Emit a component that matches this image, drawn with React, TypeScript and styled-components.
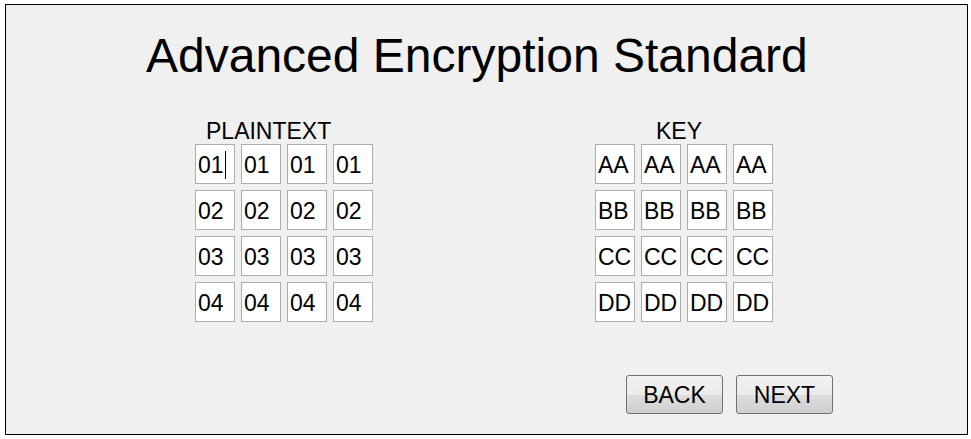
import React from 'react';
import styled, {createGlobalStyle} from 'styled-components';

const GlobalStyle = createGlobalStyle`
  body {
    margin: 0;
    background: #ffffff;
    font-family: "Liberation Sans", Arial, sans-serif;
  }
`

const Frame = styled.div`
  margin: 4px 0 0 5px;
  width: 963px;
  height: 431px;
  box-sizing: border-box;
  border: 1px solid #000;
  background: #f0f0f0;
  display: flex;
  flex-direction: column;
`
const Title = styled.h1`
  margin: 27px 0 0 0;
  padding-left: 140px;
  font-size: 48px;
  line-height: 48px;
  font-weight: 400;
  color: #000;
`
const Panels = styled.div`
  margin-top: 40px;
  padding-left: 189px;
  display: flex;
  gap: 222px;
`
const Panel = styled.div`
  display: flex;
  flex-direction: column;
`
const Label = styled.div<{$indent: number}>`
  padding-left: ${p => p.$indent}px;
  font-size: 23px;
  line-height: 22px;
  height: 22px;
  margin-bottom: 2px;
  color: #000;
`
const Grid = styled.div`
  display: grid;
  grid-template-columns: repeat(4, 40px);
  grid-auto-rows: 40px;
  gap: 6px;
`
const Cell = styled.div`
  box-sizing: border-box;
  border: 1px solid #adadad;
  background: #fff;
  font-size: 23px;
  line-height: 36px;
  padding: 2px 0 0 2px;
  color: #000;
  white-space: nowrap;
  overflow: hidden;
  display: flex;
  align-items: center;
`
const Caret = styled.span`
  display: inline-block;
  width: 1px;
  height: 28px;
  background: #000;
  margin-left: 1px;
`
const ButtonRow = styled.div`
  margin-top: 53px;
  padding-left: 620px;
  display: flex;
  gap: 13px;
`
const Button = styled.button`
  width: 97px;
  height: 39px;
  box-sizing: border-box;
  border: 1px solid #707070;
  border-radius: 3px;
  background: linear-gradient(to bottom, #f2f2f2 0%, #ebebeb 50%, #dddddd 51%, #cfcfcf 100%);
  font-family: "Liberation Sans", Arial, sans-serif;
  font-size: 23px;
  color: #000;
  padding: 2px 0 0 0;
`

const plaintext = ['01', '02', '03', '04'];
const key = ['AA', 'BB', 'CC', 'DD'];

const Matrix = ({rows, caret}: {rows: string[], caret?: boolean}) => (
  <Grid>
    {rows.map((v, r) =>
      [0, 1, 2, 3].map(c => (
        <Cell key={`${r}-${c}`}>
          {v}
          {caret && r === 0 && c === 0 && <Caret />}
        </Cell>
      ))
    )}
  </Grid>
);

const App = () => {
  return (
    <>
      <GlobalStyle />
      <Frame>
        <Title>Advanced Encryption Standard</Title>
        <Panels>
          <Panel>
            <Label $indent={11}>PLAINTEXT</Label>
            <Matrix rows={plaintext} caret />
          </Panel>
          <Panel>
            <Label $indent={61}>KEY</Label>
            <Matrix rows={key} />
          </Panel>
        </Panels>
        <ButtonRow>
          <Button>BACK</Button>
          <Button>NEXT</Button>
        </ButtonRow>
      </Frame>
    </>
  );
};

export default App;
